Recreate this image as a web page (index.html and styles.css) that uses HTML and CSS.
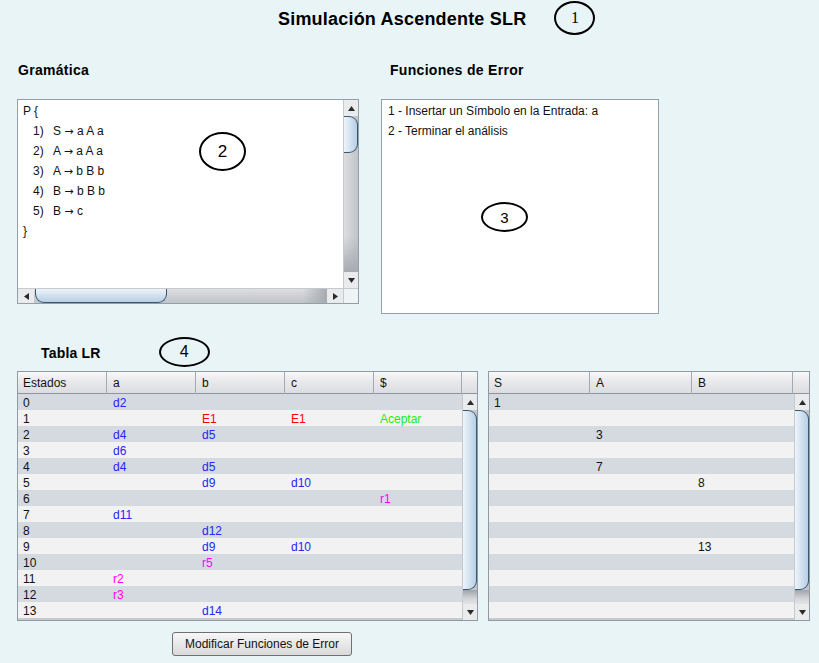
FILE: index.html
```html
<!DOCTYPE html>
<html lang="es">
<head>
<meta charset="utf-8">
<title>Simulación Ascendente SLR</title>
<link rel="stylesheet" href="styles.css">
</head>
<body>
<div class="page">
  <header class="title-row">
    <h1 class="title">Simulación Ascendente SLR</h1>
    <div class="mark mark-1">1</div>
  </header>

  <section class="panels">
    <div class="panel panel-grammar">
      <h2 class="label">Gramática</h2>
      <div class="scrollpane grammar">
        <div class="viewport">
          <div class="line">P {</div>
          <div class="line"><span class="num">1)</span>S <span class="arr">→</span> a A a</div>
          <div class="line"><span class="num">2)</span>A <span class="arr">→</span> a A a</div>
          <div class="line"><span class="num">3)</span>A <span class="arr">→</span> b B b</div>
          <div class="line"><span class="num">4)</span>B <span class="arr">→</span> b B b</div>
          <div class="line"><span class="num">5)</span>B <span class="arr">→</span> c</div>
          <div class="line">}</div>
        </div>
        <div class="vscroll vs-grammar">
          <div class="sb-btn"><svg width="7" height="5" viewBox="0 0 7 5"><path d="M3.5 0L7 5H0Z" fill="#2b2b2b"/></svg></div>
          <div class="sb-thumb"></div>
          <div class="sb-track"></div>
          <div class="sb-btn"><svg width="7" height="5" viewBox="0 0 7 5"><path d="M0 0H7L3.5 5Z" fill="#2b2b2b"/></svg></div>
        </div>
        <div class="hscroll">
          <div class="sb-btn"><svg width="5" height="7" viewBox="0 0 5 7"><path d="M0 3.5L5 0V7Z" fill="#2b2b2b"/></svg></div>
          <div class="sb-thumb"></div>
          <div class="sb-track"></div>
          <div class="sb-btn"><svg width="5" height="7" viewBox="0 0 5 7"><path d="M0 0L5 3.5L0 7Z" fill="#2b2b2b"/></svg></div>
        </div>
        <div class="corner"></div>
        <div class="mark mark-2">2</div>
      </div>
    </div>

    <div class="panel panel-errors">
      <h2 class="label">Funciones de Error</h2>
      <div class="errors">
        <div class="line">1 - Insertar un Símbolo en la Entrada: a</div>
        <div class="line">2 - Terminar el análisis</div>
        <div class="mark mark-3">3</div>
      </div>
    </div>
  </section>

  <div class="lr-head">
    <h2 class="label label-lr">Tabla LR</h2>
    <div class="mark mark-4">4</div>
  </div>

  <section class="tables">
    <div class="grid-table t-action">
      <div class="thead">
        <div class="th">Estados</div><div class="th">a</div><div class="th">b</div><div class="th">c</div><div class="th">$</div><div class="th corner-th"></div>
      </div>
      <div class="tbody">
        <div class="rows">
          <div class="row"><span>0</span><span class="sh">d2</span><span></span><span></span><span></span></div>
          <div class="row"><span>1</span><span></span><span class="er">E1</span><span class="er">E1</span><span class="ok">Aceptar</span></div>
          <div class="row"><span>2</span><span class="sh">d4</span><span class="sh">d5</span><span></span><span></span></div>
          <div class="row"><span>3</span><span class="sh">d6</span><span></span><span></span><span></span></div>
          <div class="row"><span>4</span><span class="sh">d4</span><span class="sh">d5</span><span></span><span></span></div>
          <div class="row"><span>5</span><span></span><span class="sh">d9</span><span class="sh">d10</span><span></span></div>
          <div class="row"><span>6</span><span></span><span></span><span></span><span class="rd">r1</span></div>
          <div class="row"><span>7</span><span class="sh">d11</span><span></span><span></span><span></span></div>
          <div class="row"><span>8</span><span></span><span class="sh">d12</span><span></span><span></span></div>
          <div class="row"><span>9</span><span></span><span class="sh">d9</span><span class="sh">d10</span><span></span></div>
          <div class="row"><span>10</span><span></span><span class="rd">r5</span><span></span><span></span></div>
          <div class="row"><span>11</span><span class="rd">r2</span><span></span><span></span><span></span></div>
          <div class="row"><span>12</span><span class="rd">r3</span><span></span><span></span><span></span></div>
          <div class="row"><span>13</span><span></span><span class="sh">d14</span><span></span><span></span></div>
        </div>
        <div class="vscroll vs-table">
          <div class="sb-btn"><svg width="7" height="5" viewBox="0 0 7 5"><path d="M3.5 0L7 5H0Z" fill="#2b2b2b"/></svg></div>
          <div class="sb-thumb"></div>
          <div class="sb-track"></div>
          <div class="sb-btn"><svg width="7" height="5" viewBox="0 0 7 5"><path d="M0 0H7L3.5 5Z" fill="#2b2b2b"/></svg></div>
        </div>
      </div>
    </div>

    <div class="grid-table t-goto">
      <div class="thead">
        <div class="th">S</div><div class="th">A</div><div class="th">B</div><div class="th corner-th"></div>
      </div>
      <div class="tbody">
        <div class="rows">
          <div class="row"><span>1</span><span></span><span></span></div>
          <div class="row"><span></span><span></span><span></span></div>
          <div class="row"><span></span><span>3</span><span></span></div>
          <div class="row"><span></span><span></span><span></span></div>
          <div class="row"><span></span><span>7</span><span></span></div>
          <div class="row"><span></span><span></span><span>8</span></div>
          <div class="row"><span></span><span></span><span></span></div>
          <div class="row"><span></span><span></span><span></span></div>
          <div class="row"><span></span><span></span><span></span></div>
          <div class="row"><span></span><span></span><span>13</span></div>
          <div class="row"><span></span><span></span><span></span></div>
          <div class="row"><span></span><span></span><span></span></div>
          <div class="row"><span></span><span></span><span></span></div>
          <div class="row"><span></span><span></span><span></span></div>
        </div>
        <div class="vscroll vs-table">
          <div class="sb-btn"><svg width="7" height="5" viewBox="0 0 7 5"><path d="M3.5 0L7 5H0Z" fill="#2b2b2b"/></svg></div>
          <div class="sb-thumb"></div>
          <div class="sb-track"></div>
          <div class="sb-btn"><svg width="7" height="5" viewBox="0 0 7 5"><path d="M0 0H7L3.5 5Z" fill="#2b2b2b"/></svg></div>
        </div>
      </div>
    </div>
  </section>

  <div class="actions">
    <button class="btn" type="button">Modificar Funciones de Error</button>
  </div>
</div>
</body>
</html>
```

FILE: styles.css
```css
* { box-sizing: border-box; }

body {
  margin: 0;
  background: #e8f4f5;
  font-family: "Liberation Sans", Arial, sans-serif;
  font-size: 12px;
  color: #111;
}

.page {
  width: 819px;
  height: 663px;
  overflow: hidden;
}

/* title */
.title-row {
  display: flex;
  align-items: flex-start;
  height: 37px;
  padding-left: 278px;
}
.title {
  margin: 0;
  font-size: 18px;
  line-height: 38px;
  font-weight: bold;
  letter-spacing: 0.2px;
  color: #000;
}

/* annotation ellipses */
.mark {
  border: 2px solid #000;
  border-radius: 50%;
  display: flex;
  align-items: center;
  justify-content: center;
  color: #000;
  font-family: "Liberation Sans", Arial, sans-serif;
}
.mark-1 {
  margin-left: 28px;
  margin-top: 1px;
  width: 41px;
  height: 34px;
  font-family: "Liberation Serif", "Times New Roman", serif;
  font-size: 16px;
}
.mark-2 {
  position: absolute;
  left: 181px;
  top: 32px;
  width: 47px;
  height: 39px;
  font-size: 17px;
}
.mark-3 {
  position: absolute;
  left: 99px;
  top: 102px;
  width: 47px;
  height: 30px;
  font-size: 15px;
}
.mark-4 {
  margin-left: 58px;
  margin-top: 2px;
  width: 51px;
  height: 30px;
  font-size: 16px;
}

/* panels */
.panels {
  display: flex;
  align-items: flex-start;
  gap: 22px;
  padding-left: 17px;
  margin-top: 24px;
}
.label {
  margin: 0 0 20px;
  font-size: 14px;
  line-height: 18px;
  font-weight: bold;
  letter-spacing: 0.3px;
  color: #000;
}
.panel-grammar .label { padding-left: 1px; }
.panel-errors .label { padding-left: 9px; }

.line {
  height: 20px;
  line-height: 20px;
  white-space: nowrap;
}

.scrollpane.grammar {
  position: relative;
  width: 342px;
  height: 205px;
  border: 1px solid #959fa9;
  background: #fff;
  display: grid;
  grid-template-columns: 1fr 15px;
  grid-template-rows: 1fr 15px;
}
.viewport {
  padding: 1px 0 0 5px;
  overflow: hidden;
}
.num {
  display: inline-block;
  margin-left: 10px;
  width: 20px;
}
.arr {
  font-family: "DejaVu Sans", sans-serif;
  font-size: 11px;
  line-height: 10px;
}

.errors {
  position: relative;
  width: 278px;
  height: 215px;
  border: 1px solid #959fa9;
  background: #fff;
  padding: 1px 0 0 6px;
}

/* scrollbars */
.vscroll {
  display: flex;
  flex-direction: column;
  background: linear-gradient(to right, #dcdee1, #c0c3c8);
  border-left: 1px solid #c6cace;
}
.hscroll {
  display: flex;
  background: linear-gradient(to bottom, #dcdee1, #c0c3c8);
  border-top: 1px solid #c6cace;
}
.sb-btn {
  flex: none;
  display: flex;
  align-items: center;
  justify-content: center;
  background: #e9ebed;
}
.vscroll .sb-btn { height: 16px; }
.hscroll .sb-btn { width: 16px; }
.sb-track { flex: 1; }
.vscroll .sb-track {
  background: linear-gradient(to bottom, transparent 70%, #a7abb1);
}
.hscroll .sb-track {
  background: linear-gradient(to right, transparent 85%, #a7abb1);
}
.sb-thumb {
  flex: none;
  border: 1px solid #3a5772;
}
.vscroll .sb-thumb {
  border-left: none;
  border-radius: 0 9px 9px 0;
  background: linear-gradient(to right, #eef4fa, #b7cfe5);
}
.hscroll .sb-thumb {
  border-top: none;
  border-radius: 0 0 9px 9px;
  margin-left: 1px;
  width: 132px;
  background: linear-gradient(to bottom, #eef4fa, #b7cfe5);
}
.vs-grammar .sb-thumb { height: 37px; }
.vs-table .sb-thumb { height: 180px; }
.vs-table .sb-track {
  background: linear-gradient(to bottom, #9fa3a9, #d2d4d7 60%, #e1e3e5);
}

.corner {
  background: #eef3f5;
  border-left: 1px solid #c6cace;
  border-top: 1px solid #c6cace;
}

/* Tabla LR */
.lr-head {
  display: flex;
  align-items: flex-start;
  height: 36px;
  margin-top: 21px;
  padding-left: 41px;
}
.label-lr {
  margin: 0;
  line-height: 37px;
  letter-spacing: 0.2px;
}

.tables {
  display: flex;
  gap: 10px;
  padding-left: 17px;
}
.grid-table {
  height: 250px;
  border: 1px solid #8f9aa5;
  display: flex;
  flex-direction: column;
  background: #f2f2f2;
}
.t-action { width: 461px; }
.t-goto { width: 322px; }

.thead {
  display: grid;
  height: 22px;
  border-bottom: 1px solid #8e949b;
  background: linear-gradient(to bottom, #f8f8f9, #e9e9eb 45%, #dcdde1);
}
.th {
  border-right: 1px solid #a3a9b0;
  padding-left: 6px;
  line-height: 23px;
  color: #111;
}
.th:first-child { padding-left: 5px; }
.corner-th { border-right: none; }

.t-action .thead { grid-template-columns: 89px 89px 89px 89px 88px 1fr; }
.t-goto .thead { grid-template-columns: 101px 102px 101px 1fr; }

.tbody {
  flex: 1;
  display: flex;
  min-height: 0;
}
.rows {
  flex: 1;
  border-bottom: 2px solid #c8cacd;
}
.row {
  display: grid;
  height: 16px;
  line-height: 18px;
}
.row:nth-child(odd) { background: #d5d9e0; }
.row:nth-child(even) { background: #f2f2f2; }
.row span { padding-left: 6px; white-space: nowrap; }
.row span:first-child { padding-left: 5px; }

.t-action .row { grid-template-columns: 89px 89px 89px 89px 88px; }
.t-goto .row { grid-template-columns: 101px 102px 101px; }
.vs-table { width: 15px; flex: none; }

.sh { color: #2424ff; }
.er { color: #ff0000; }
.ok { color: #16f016; }
.rd { color: #ff00ff; }

/* bottom button */
.actions {
  padding-left: 172px;
  margin-top: 11px;
}
.btn {
  width: 180px;
  height: 24px;
  border: 1px solid #707070;
  border-radius: 3px;
  background: linear-gradient(to bottom, #f7f7f7, #e8e8e8 50%, #d9d9d9);
  font-family: "Liberation Sans", Arial, sans-serif;
  font-size: 12px;
  color: #111;
  padding: 0;
}
```
